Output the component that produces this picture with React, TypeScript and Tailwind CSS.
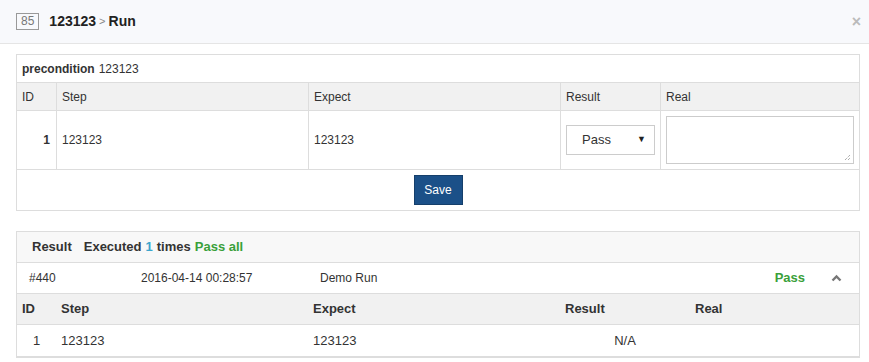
import React from 'react';

const font = { fontFamily: '"Liberation Sans", Arial, sans-serif' };

const steps = [{ id: 1, step: '123123', expect: '123123' }];

export default function App() {
  return (
    <div className="w-[869px] h-[362px] bg-white text-[12px] text-[#333] overflow-hidden" style={font}>
      {/* modal header */}
      <div className="h-[44px] bg-[#f8f9fc] border-b border-[#e5e5e5] flex items-center pl-4 pr-[8px]">
        <span className="border border-[#999] text-[#777] text-[12px] leading-[13px] px-[4px] py-[1px]">85</span>
        <span className="ml-[10px] text-[14px] font-bold text-[#222]">123123</span>
        <span className="mx-[3px] text-[#888] text-[11px]">&gt;</span>
        <span className="text-[14px] font-bold text-[#222]">Run</span>
        <span className="ml-auto text-[#bbb] text-[16px] font-bold leading-none">×</span>
      </div>

      <div className="px-4 pt-[10px]">
        {/* run form */}
        <div className="w-[844px] border border-[#ddd]">
          <div className="h-[28px] flex items-center px-[5px] border-b border-[#ddd]">
            <span className="font-bold">precondition</span>
            <span className="ml-[4px]">123123</span>
          </div>
          <div className="grid grid-cols-[39px_252px_252px_100px_199px] bg-[#f1f1f1] h-[28px] border-b border-[#ddd]">
            <div className="px-[5px] flex items-center">ID</div>
            <div className="px-[5px] flex items-center border-l border-[#ddd]">Step</div>
            <div className="px-[5px] flex items-center border-l border-[#ddd]">Expect</div>
            <div className="px-[5px] flex items-center border-l border-[#ddd]">Result</div>
            <div className="px-[5px] flex items-center border-l border-[#ddd]">Real</div>
          </div>
          {steps.map((s) => (
            <div key={s.id} className="grid grid-cols-[39px_252px_252px_100px_199px] h-[59px] border-b border-[#ddd]">
              <div className="px-[6px] flex items-center justify-end font-bold">{s.id}</div>
              <div className="px-[5px] flex items-center border-l border-[#ddd]">{s.step}</div>
              <div className="px-[5px] flex items-center border-l border-[#ddd]">{s.expect}</div>
              <div className="px-[5px] flex items-center border-l border-[#ddd]">
                <div className="w-[89px] h-[30px] border border-[#ccc] flex items-center pl-[15px] pr-[8px] text-[13px]">
                  <span>Pass</span>
                  <span className="ml-auto text-[9px] text-[#222]">▼</span>
                </div>
              </div>
              <div className="pl-[5px] pt-[5px] border-l border-[#ddd] relative">
                <div className="w-[188px] h-[48px] border border-[#ccc] relative">
                  <svg className="absolute right-[2px] bottom-[2px]" width="7" height="7" viewBox="0 0 7 7">
                    <path d="M1 6L6 1M4 6L6 4" stroke="#888" strokeWidth="1" strokeDasharray="1 1" />
                  </svg>
                </div>
              </div>
            </div>
          ))}
          <div className="h-[40px] flex items-center justify-center">
            <button className="w-[49px] h-[30px] bg-[#1b5088] text-white text-[12px] border border-[#153f6b]">Save</button>
          </div>
        </div>

        {/* results */}
        <div className="w-[844px] mt-[20px] border border-[#ddd] border-b-[2px]">
          <div className="h-[31px] bg-[#f8f8f8] border-b border-[#ddd] flex items-center pl-[15px] font-bold text-[13px]">
            <span>Result</span>
            <span className="ml-[12px]">Executed</span>
            <span className="ml-[4px] text-[#3ba5cc]">1</span>
            <span className="ml-[4px]">times</span>
            <span className="ml-[4px] text-[#3aa03a]">Pass all</span>
          </div>
          <div className="h-[31px] flex items-center border-b border-[#ddd]">
            <span className="w-[124px] pl-[12px]">#440</span>
            <span className="w-[179px]">2016-04-14 00:28:57</span>
            <span>Demo Run</span>
            <span className="ml-auto text-[#3aa03a] font-bold text-[13px]">Pass</span>
            <svg className="ml-[26px] mr-[17px]" width="11" height="8" viewBox="0 0 11 8">
              <path d="M1.5 6.5L5.5 2.5L9.5 6.5" fill="none" stroke="#777" strokeWidth="2.4" />
            </svg>
          </div>
          <div className="grid grid-cols-[39px_252px_252px_130px_169px] bg-[#f1f1f1] h-[31px] border-b border-[#ddd] font-bold text-[13px]">
            <div className="px-[5px] flex items-center">ID</div>
            <div className="px-[5px] flex items-center">Step</div>
            <div className="px-[5px] flex items-center">Expect</div>
            <div className="px-[5px] flex items-center">Result</div>
            <div className="px-[5px] flex items-center">Real</div>
          </div>
          {steps.map((s) => (
            <div key={s.id} className="grid grid-cols-[39px_252px_252px_130px_169px] h-[31px] text-[13px]">
              <div className="flex items-center justify-center">{s.id}</div>
              <div className="px-[5px] flex items-center">{s.step}</div>
              <div className="px-[5px] flex items-center">{s.expect}</div>
              <div className="flex items-center justify-center">N/A</div>
              <div className="px-[5px] flex items-center"></div>
            </div>
          ))}
        </div>
      </div>
    </div>
  );
}
